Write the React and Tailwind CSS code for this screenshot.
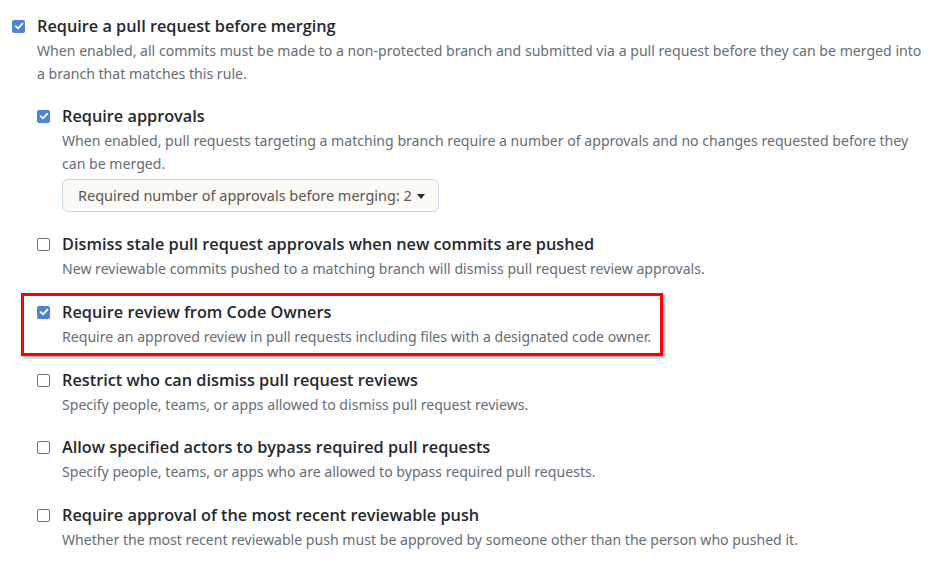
import React from "react";

function Box({ checked }) {
  if (checked) {
    return (
      <span className="flex h-[13px] w-[13px] shrink-0 items-center justify-center rounded-[2px] bg-[#4a86d4]">
        <svg width="10" height="10" viewBox="0 0 10 10">
          <path d="M1.6 5.2 L4 7.4 L8.4 2.6" fill="none" stroke="white" strokeWidth="1.8" strokeLinecap="round" strokeLinejoin="round" />
        </svg>
      </span>
    );
  }
  return <span className="block h-[13px] w-[13px] shrink-0 rounded-[2px] border border-[#7a6f6f] bg-white" />;
}

function Item({ checked, title, children, className = "" }) {
  return (
    <div className={"flex " + className}>
      <div className="flex h-6 w-[25px] shrink-0 items-center">
        <Box checked={checked} />
      </div>
      <div className="min-w-0 flex-1">
        <div
          className="text-[16.3px] leading-6 font-semibold text-[#24292f]"
          style={{ fontFamily: '"Open Sans", "Noto Sans", sans-serif' }}
        >
          {title}
        </div>
        {children}
      </div>
    </div>
  );
}

function Desc({ children }) {
  return <p className="mt-[1px] text-[14.1px] leading-[23px] text-[#656d76]">{children}</p>;
}

export default function App() {
  return (
    <div
      className="h-[564px] w-[946px] overflow-hidden bg-white pl-[12px] pt-[14px] pr-[18px]"
      style={{ fontFamily: '"Noto Sans", "Open Sans", sans-serif' }}
    >
      <Item checked title="Require a pull request before merging">
        <Desc>
          When enabled, all commits must be made to a non-protected branch and submitted via a pull request before they can be merged into a branch that matches this rule.
        </Desc>
        <div className="mt-[19px] flex flex-col">
          <Item checked title="Require approvals">
            <Desc>
              When enabled, pull requests targeting a matching branch require a number of approvals and no changes requested before they can be merged.
            </Desc>
            <button className="mt-[4px] flex h-[33px] w-[377px] items-center rounded-md border border-[#c9d6e3] bg-[#fbfaf4] pl-[15px] text-[14.5px] text-[#5c5555]">
              Required number of approvals before merging: 2
              <span className="ml-[5px] mt-[1px] h-0 w-0 border-x-[4.5px] border-t-[5px] border-x-transparent border-t-[#24292f]" />
            </button>
          </Item>
          <Item className="mt-[20px]" title="Dismiss stale pull request approvals when new commits are pushed">
            <Desc>New reviewable commits pushed to a matching branch will dismiss pull request review approvals.</Desc>
          </Item>
          <div className="relative mt-[20px]">
            <div className="pointer-events-none absolute left-[-16px] top-[-7px] h-[63px] w-[642px] border-[3px] border-[#ff0000] shadow-[2px_2px_2px_rgba(0,0,0,0.3)]" />
            <Item checked title="Require review from Code Owners">
              <Desc>Require an approved review in pull requests including files with a designated code owner.</Desc>
            </Item>
          </div>
          <Item className="mt-[20px]" title="Restrict who can dismiss pull request reviews">
            <Desc>Specify people, teams, or apps allowed to dismiss pull request reviews.</Desc>
          </Item>
          <Item className="mt-[19px]" title="Allow specified actors to bypass required pull requests">
            <Desc>Specify people, teams, or apps who are allowed to bypass required pull requests.</Desc>
          </Item>
          <Item className="mt-[20px]" title="Require approval of the most recent reviewable push">
            <Desc>Whether the most recent reviewable push must be approved by someone other than the person who pushed it.</Desc>
          </Item>
        </div>
      </Item>
    </div>
  );
}
